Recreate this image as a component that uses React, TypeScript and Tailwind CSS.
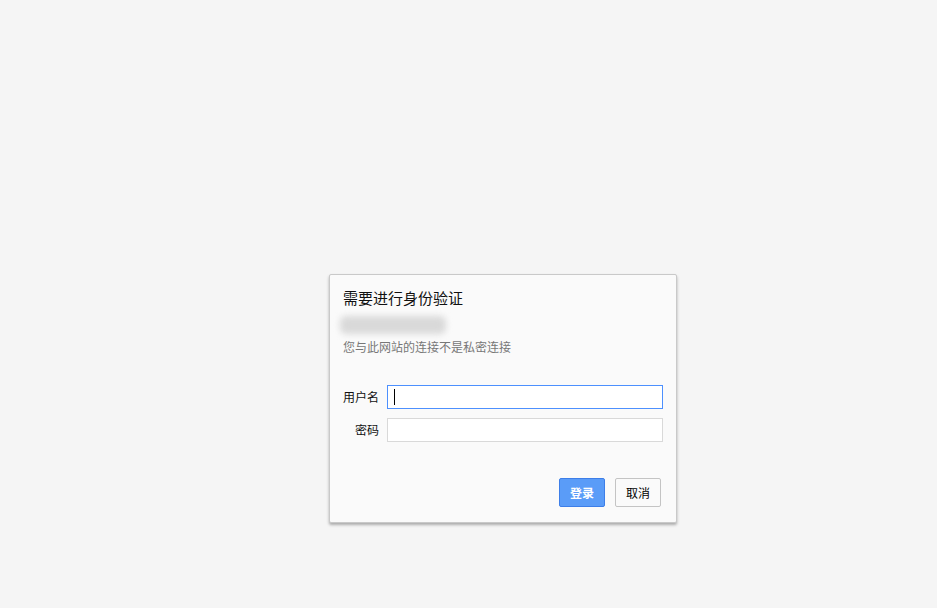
export default function App() {
  return (
    <div
      className="min-h-[608px] w-full bg-[#f5f5f5] pt-[274px] pl-[329px]"
      style={{ fontFamily: '"Noto Sans CJK SC", "Noto Sans", sans-serif' }}
    >
      {/* auth dialog */}
      <div className="w-[348px] rounded-[2px] border border-[#c9c9c9] bg-[#fafafa] pt-[13px] pb-[15px] shadow-[0_2px_3px_rgba(0,0,0,0.3)]">
        <div className="pl-[13px] pr-[13px]">
          <p className="text-[15px] leading-[20px] text-[#111]">需要进行身份验证</p>
          <div className="mt-[8px] h-[18px] w-[106px] ml-[-3px] rounded-[6px] bg-[#d9d9d9] blur-[3px]" />
          <p className="mt-[4px] text-[12px] leading-[18px] text-[#777]">
            您与此网站的连接不是私密连接
          </p>

          <div className="mt-[29px] flex flex-col gap-[9px]">
            <div className="flex items-center gap-[8px]">
              <label className="w-[36px] text-right text-[12px] text-[#111]">用户名</label>
              <div className="flex h-[24px] w-[276px] items-center border border-[#4d90fe] bg-white pl-[6px]">
                <span className="h-[16px] w-[1px] bg-black" />
              </div>
            </div>
            <div className="flex items-center gap-[8px]">
              <label className="w-[36px] text-right text-[12px] text-[#111]">密码</label>
              <div className="h-[24px] w-[276px] border border-[#d9d9d9] bg-white" />
            </div>
          </div>
        </div>

        <div className="mt-[36px] flex justify-end gap-[10px] pr-[15px]">
          <button className="h-[29px] w-[46px] rounded-[2px] border border-[#3d7ee8] bg-[#5a9cf8] text-[12px] font-bold text-white">
            登录
          </button>
          <button className="h-[29px] w-[46px] rounded-[2px] border border-[#c4c4c4] bg-[#fafafa] text-[12px] text-black">
            取消
          </button>
        </div>
      </div>
    </div>
  );
}
